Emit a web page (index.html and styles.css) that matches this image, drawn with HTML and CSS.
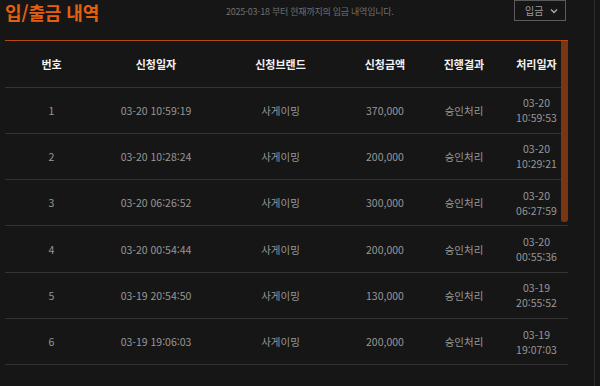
FILE: index.html
```html
<!DOCTYPE html>
<html lang="ko">
<head>
<meta charset="utf-8">
<link rel="stylesheet" href="styles.css">
</head>
<body>
<div class="page">
  <div class="main">
    <div class="top">
      <h1 class="title">입/출금 내역</h1>
      <div class="subtitle">2025-03-18 부터 현재까지의 입금 내역입니다.</div>
      <div class="select">
        <span class="select-text">입금</span>
        <svg class="chev" width="8" height="6" viewBox="0 0 8 6"><path d="M1 1.5 L4 4.5 L7 1.5" fill="none" stroke="#aaa" stroke-width="1.4"/></svg>
      </div>
    </div>
    <div class="table-wrap">
      <table class="list">
        <colgroup>
          <col class="c1"><col class="c2"><col class="c3"><col class="c4"><col class="c5"><col class="c6">
        </colgroup>
        <thead>
          <tr><th>번호</th><th>신청일자</th><th>신청브랜드</th><th>신청금액</th><th>진행결과</th><th>처리일자</th></tr>
        </thead>
        <tbody>
          <tr><td>1</td><td>03-20 10:59:19</td><td>사게이밍</td><td>370,000</td><td>승인처리</td><td>03-20<br>10:59:53</td></tr>
          <tr><td>2</td><td>03-20 10:28:24</td><td>사게이밍</td><td>200,000</td><td>승인처리</td><td>03-20<br>10:29:21</td></tr>
          <tr><td>3</td><td>03-20 06:26:52</td><td>사게이밍</td><td>300,000</td><td>승인처리</td><td>03-20<br>06:27:59</td></tr>
          <tr><td>4</td><td>03-20 00:54:44</td><td>사게이밍</td><td>200,000</td><td>승인처리</td><td>03-20<br>00:55:36</td></tr>
          <tr><td>5</td><td>03-19 20:54:50</td><td>사게이밍</td><td>130,000</td><td>승인처리</td><td>03-19<br>20:55:52</td></tr>
          <tr><td>6</td><td>03-19 19:06:03</td><td>사게이밍</td><td>200,000</td><td>승인처리</td><td>03-19<br>19:07:03</td></tr>
        </tbody>
      </table>
      <div class="thumb"></div>
    </div>
  </div>
  <div class="gutter"></div>
</div>
</body>
</html>
```
FILE: styles.css
```css
* { box-sizing: border-box; }
html, body {
  margin: 0;
  padding: 0;
  background: #161616;
  height: 100%;
  overflow: hidden;
}
body {
  font-family: "Noto Sans CJK KR", "Noto Sans", sans-serif;
  color: #9a9a9a;
}
.page {
  display: flex;
  height: 386px;
}
.main {
  margin-left: 5px;
  width: 563px;
}
.gutter {
  margin-left: 26px;
  width: 6px;
  border-left: 1px solid #2b2b2b;
}
.top {
  height: 40px;
  display: flex;
  align-items: flex-start;
  position: relative;
}
.title {
  margin: 0;
  font-size: 18px;
  line-height: 24px;
  font-weight: 700;
  color: #e4600f;
  width: 221px;
  letter-spacing: -0.1px;
}
.subtitle {
  font-size: 9px;
  line-height: 24px;
  color: #707070;
  width: 289px;
  letter-spacing: -0.25px;
}
.select {
  width: 52px;
  height: 21px;
  border: 1px solid #5a5a5a;
  display: flex;
  align-items: center;
  padding-left: 10px;
  margin-left: -1px;
}
.select-text {
  font-size: 10px;
  color: #9a9a9a;
  flex: 1;
}
.chev { margin-right: 7px; }
.table-wrap {
  position: relative;
  border-top: 1.5px solid #b44a10;
}
.list {
  width: 100%;
  border-collapse: collapse;
  table-layout: fixed;
}
.c1 { width: 93px; }
.c2 { width: 116px; }
.c3 { width: 133px; }
.c4 { width: 76px; }
.c5 { width: 82px; }
.c6 { width: 63px; }
.list th {
  height: 46px;
  font-size: 11px;
  font-weight: 700;
  color: #f2f2f2;
  border-bottom: 1px solid #333;
  padding: 0;
  text-align: center;
}
.list td {
  height: 46.33px;
  font-size: 10.5px;
  line-height: 15px;
  color: #979797;
  border-bottom: 1px solid #333;
  padding: 0;
  text-align: center;
}
.thumb {
  position: absolute;
  right: 0;
  top: 0;
  width: 7px;
  height: 181px;
  background: #7a3512;
  border-radius: 0 0 3px 3px;
}
```
